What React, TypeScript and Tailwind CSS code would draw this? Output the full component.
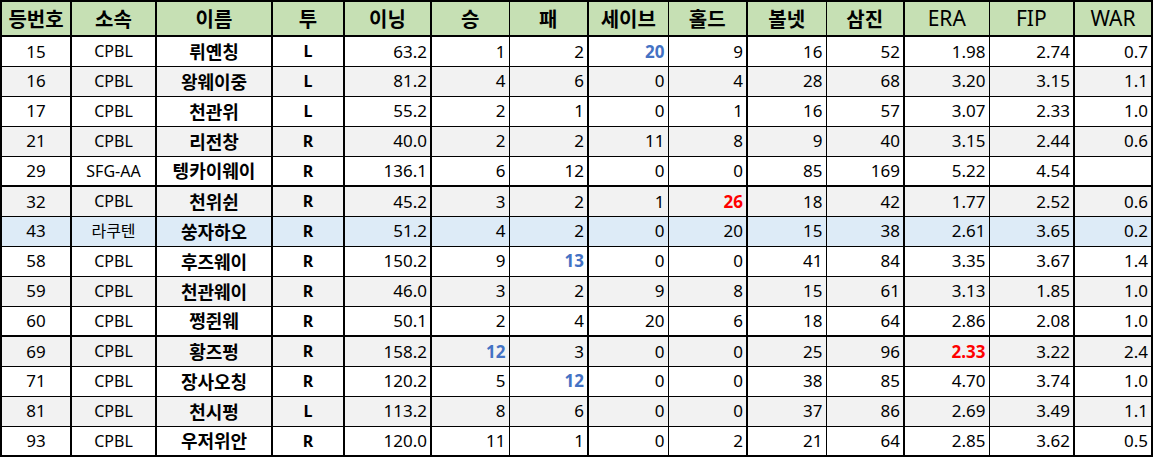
import React from "react";

type Mark = "blue" | "red";

type Row = {
  no: string;
  team: string;
  name: string;
  hand: string;
  stats: string[];
  marks?: Record<number, Mark>;
  tone: "white" | "gray" | "blue";
};

const headers = ["등번호", "소속", "이름", "투", "이닝", "승", "패", "세이브", "홀드", "볼넷", "삼진", "ERA", "FIP", "WAR"];

// column widths in px, boundary to boundary
const widths = [70, 85, 116, 72, 87, 78, 79, 80, 79, 79, 78, 85, 85, 78];

// right border of each column: true = thick
const thickRight = [true, true, true, true, true, false, true, false, true, false, true, false, true, true];

const rows: Row[] = [
  { no: "15", team: "CPBL", name: "뤼옌칭", hand: "L", stats: ["63.2", "1", "2", "20", "9", "16", "52", "1.98", "2.74", "0.7"], marks: { 3: "blue" }, tone: "white" },
  { no: "16", team: "CPBL", name: "왕웨이중", hand: "L", stats: ["81.2", "4", "6", "0", "4", "28", "68", "3.20", "3.15", "1.1"], tone: "gray" },
  { no: "17", team: "CPBL", name: "천관위", hand: "L", stats: ["55.2", "2", "1", "0", "1", "16", "57", "3.07", "2.33", "1.0"], tone: "white" },
  { no: "21", team: "CPBL", name: "리전창", hand: "R", stats: ["40.0", "2", "2", "11", "8", "9", "40", "3.15", "2.44", "0.6"], tone: "gray" },
  { no: "29", team: "SFG-AA", name: "텡카이웨이", hand: "R", stats: ["136.1", "6", "12", "0", "0", "85", "169", "5.22", "4.54", ""], tone: "white" },
  { no: "32", team: "CPBL", name: "천위쉰", hand: "R", stats: ["45.2", "3", "2", "1", "26", "18", "42", "1.77", "2.52", "0.6"], marks: { 4: "red" }, tone: "gray" },
  { no: "43", team: "라쿠텐", name: "쑹자하오", hand: "R", stats: ["51.2", "4", "2", "0", "20", "15", "38", "2.61", "3.65", "0.2"], tone: "blue" },
  { no: "58", team: "CPBL", name: "후즈웨이", hand: "R", stats: ["150.2", "9", "13", "0", "0", "41", "84", "3.35", "3.67", "1.4"], marks: { 2: "blue" }, tone: "white" },
  { no: "59", team: "CPBL", name: "천관웨이", hand: "R", stats: ["46.0", "3", "2", "9", "8", "15", "61", "3.13", "1.85", "1.0"], tone: "gray" },
  { no: "60", team: "CPBL", name: "쩡쥔웨", hand: "R", stats: ["50.1", "2", "4", "20", "6", "18", "64", "2.86", "2.08", "1.0"], tone: "white" },
  { no: "69", team: "CPBL", name: "황즈펑", hand: "R", stats: ["158.2", "12", "3", "0", "0", "25", "96", "2.33", "3.22", "2.4"], marks: { 1: "blue", 7: "red" }, tone: "gray" },
  { no: "71", team: "CPBL", name: "장사오칭", hand: "R", stats: ["120.2", "5", "12", "0", "0", "38", "85", "4.70", "3.74", "1.0"], marks: { 2: "blue" }, tone: "white" },
  { no: "81", team: "CPBL", name: "천시펑", hand: "L", stats: ["113.2", "8", "6", "0", "0", "37", "86", "2.69", "3.49", "1.1"], tone: "gray" },
  { no: "93", team: "CPBL", name: "우저위안", hand: "R", stats: ["120.0", "11", "1", "0", "2", "21", "64", "2.85", "3.62", "0.5"], tone: "white" },
];

// rows after which a thick line runs
const thickBelow = [4, 9, 13];

const toneBg = {
  white: "bg-white",
  gray: "bg-[#f2f2f2]",
  blue: "bg-[#ddebf7]",
};

function edge(col: number, rowIdx: number) {
  const r = thickRight[col] ? "border-r-2" : "border-r";
  const b = thickBelow.includes(rowIdx) ? "border-b-2" : "border-b";
  const l = col === 0 ? "border-l-2" : "";
  return `${r} ${b} ${l} border-black`;
}

export default function App() {
  return (
    <div className="bg-white w-[1155px] h-[457px] font-['Noto_Sans','Noto_Sans_CJK_KR',sans-serif] text-black">
      <table className="table-fixed border-collapse w-[1153px]">
        <colgroup>
          {widths.map((w, i) => (
            <col key={i} style={{ width: w }} />
          ))}
        </colgroup>
        <thead>
          <tr className="h-[35px] bg-[#c6e0b4]">
            {headers.map((h, i) => {
              const latin = /^[A-Z]+$/.test(h);
              return (
                <th
                  key={h}
                  className={`${thickRight[i] ? "border-r-2" : "border-r"} ${i === 0 ? "border-l-2" : ""} border-t-2 border-b-2 border-black p-0 text-center leading-none ${
                    latin ? "text-[21px] font-normal" : "text-[20px] font-bold font-['Noto_Sans_CJK_KR',sans-serif]"
                  }`}
                >
                  {h}
                </th>
              );
            })}
          </tr>
        </thead>
        <tbody>
          {rows.map((row, ri) => (
            <tr key={row.no} className={`h-[30px] ${toneBg[row.tone]}`}>
              <td className={`${edge(0, ri)} p-0 text-center text-[17px]`}>{row.no}</td>
              <td className={`${edge(1, ri)} p-0 text-center text-[16px]`}>{row.team}</td>
              <td className={`${edge(2, ri)} p-0 text-center text-[18px] font-bold font-['Noto_Sans_CJK_KR',sans-serif]`}>
                {row.name}
              </td>
              <td className={`${edge(3, ri)} p-0 text-center text-[16px] font-bold`}>{row.hand}</td>
              {row.stats.map((s, si) => {
                const mark = row.marks?.[si];
                const color =
                  mark === "blue" ? "text-[#4472c4] font-bold" : mark === "red" ? "text-[#ff0000] font-bold" : "";
                return (
                  <td key={si} className={`${edge(si + 4, ri)} p-0 pr-[3px] text-right text-[17px] ${color}`}>
                    {s}
                  </td>
                );
              })}
            </tr>
          ))}
        </tbody>
      </table>
    </div>
  );
}
